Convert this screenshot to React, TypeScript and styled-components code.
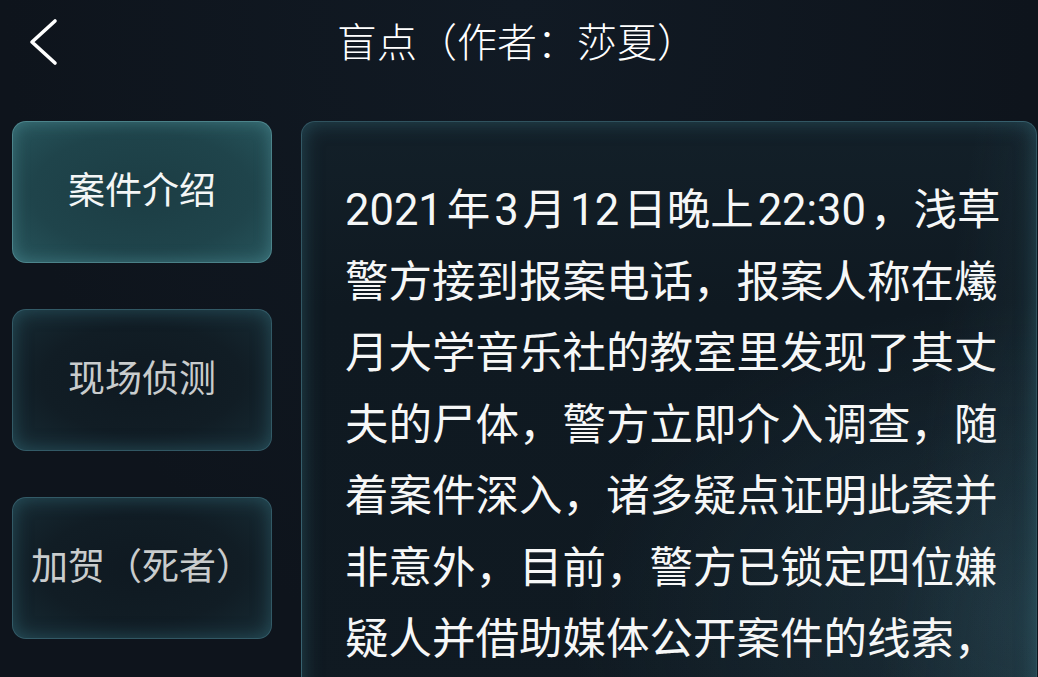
import React from "react";
import styled, { createGlobalStyle, css } from "styled-components";

const GlobalStyle = createGlobalStyle`
  html, body {
    margin: 0;
    padding: 0;
    height: 100%;
    overflow: hidden;
    background: #0f1620;
  }
  * { box-sizing: border-box; }
  body {
    font-family: Roboto, "Noto Sans CJK SC", sans-serif;
  }
`;

const Page = styled.div`
  width: 1038px;
  height: 677px;
  overflow: hidden;
  background: radial-gradient(ellipse at 50% 0%, #111a24 0%, #0e141c 70%);
  display: flex;
  flex-direction: column;
`;

const Header = styled.header`
  height: 84px;
  flex: none;
  display: flex;
  align-items: center;
  justify-content: center;
  position: relative;
`;

const BackButton = styled.button`
  position: absolute;
  left: 22px;
  top: 14px;
  width: 40px;
  height: 56px;
  padding: 0;
  border: none;
  background: transparent;
  display: flex;
  align-items: center;
  justify-content: center;
`;

const Title = styled.h1`
  margin: 0;
  font-family: "Noto Sans CJK SC", sans-serif;
  font-weight: 300;
  font-size: 40px;
  line-height: 1;
  color: #ffffff;
  transform: translate(-2px, -2px);
`;

const Main = styled.main`
  flex: 1;
  display: flex;
  align-items: flex-start;
  gap: 29px;
  padding: 37px 0 0 12px;
  min-height: 0;
`;

const Sidebar = styled.nav`
  width: 260px;
  flex: none;
  display: flex;
  flex-direction: column;
  gap: 46px;
`;

const TabButton = styled.button<{ $active?: boolean }>`
  width: 260px;
  height: 142px;
  border-radius: 14px;
  display: flex;
  align-items: center;
  justify-content: center;
  padding: 0 0 8px 0;
  font-family: "Noto Sans CJK SC", sans-serif;
  font-size: 37px;
  font-weight: 400;
  white-space: nowrap;
  cursor: pointer;
  ${(p) =>
    p.$active
      ? css`
          color: #f4f6f6;
          background: radial-gradient(ellipse at 50% 50%, #1c3d44 0%, #1f444b 60%, #27555c 100%);
          border: 1px solid rgba(110, 175, 182, 0.55);
          box-shadow: inset 0 0 16px rgba(90, 160, 168, 0.45);
        `
      : css`
          color: #c9cccd;
          background: radial-gradient(ellipse at 50% 50%, #0f1921 0%, #111d25 55%, #172c35 100%);
          border: 1px solid rgba(80, 140, 155, 0.5);
          box-shadow: inset 0 0 18px rgba(55, 115, 130, 0.5);
        `}
`;

const Panel = styled.section`
  width: 736px;
  height: 620px;
  flex: none;
  border-radius: 14px;
  border: 1px solid rgba(80, 140, 155, 0.5);
  box-shadow: inset 0 0 20px rgba(55, 115, 130, 0.5);
  background:
    linear-gradient(100deg, transparent 0%, transparent 80%, rgba(60, 110, 125, 0.22) 100%),
    radial-gradient(ellipse at 100% 80%, rgba(55, 95, 110, 0.3) 0%, transparent 45%),
    linear-gradient(180deg, #132029 0%, #0f1921 30%, #101a22 100%);
  padding: 53px 0 0 43px;
  overflow: hidden;
`;

const Story = styled.p`
  margin: 0;
  font-family: Roboto, "Noto Sans CJK SC", sans-serif;
  font-size: 43.5px;
  line-height: 71.5px;
  font-weight: 400;
  color: #f6f7f7;
  white-space: nowrap;
`;

const Num = styled.span<{ $first?: boolean }>`
  margin: 0 4px 0 ${(p) => (p.$first ? "0" : "4px")};
`;

const lines = [
  "警方接到报案电话，报案人称在爔",
  "月大学音乐社的教室里发现了其丈",
  "夫的尸体，警方立即介入调查，随",
  "着案件深入，诸多疑点证明此案并",
  "非意外，目前，警方已锁定四位嫌",
  "疑人并借助媒体公开案件的线索，",
];

export default function App() {
  return (
    <>
      <GlobalStyle />
      <Page>
        <Header>
          <BackButton aria-label="返回">
            <svg width="34" height="48" viewBox="0 0 34 48" fill="none">
              <polyline
                points="30,3 7,24 30,45"
                stroke="#ffffff"
                strokeWidth="3.6"
                strokeLinecap="round"
                strokeLinejoin="round"
              />
            </svg>
          </BackButton>
          <Title>盲点（作者：莎夏）</Title>
        </Header>
        <Main>
          <Sidebar>
            <TabButton $active>案件介绍</TabButton>
            <TabButton>现场侦测</TabButton>
            <TabButton>加贺（死者）</TabButton>
          </Sidebar>
          <Panel>
            <Story>
              <Num $first>2021</Num>年<Num>3</Num>月<Num>12</Num>日晚上<Num>22:30</Num>，浅草
              {lines.map((l, i) => (
                <React.Fragment key={i}>
                  <br />
                  {l}
                </React.Fragment>
              ))}
            </Story>
          </Panel>
        </Main>
      </Page>
    </>
  );
}
